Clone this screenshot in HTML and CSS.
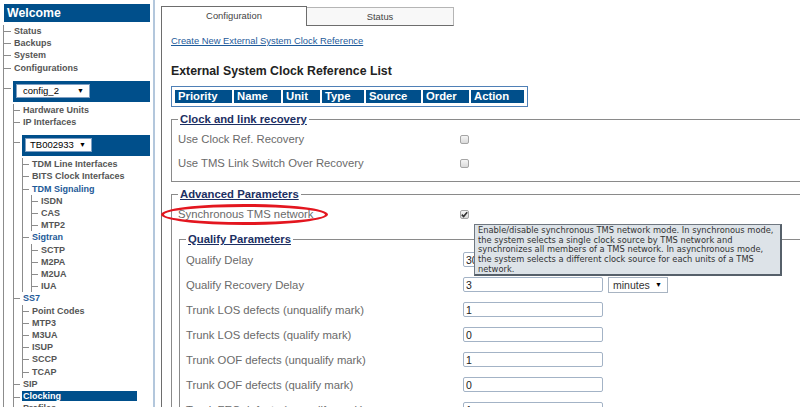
FILE: index.html
```html
<!DOCTYPE html>
<html>
<head>
	<meta charset="utf-8">
	<title>Clocking</title>
	<link rel="stylesheet" href="styles.css">
</head>
<body>
<div class="page">
	<div class="sidebar">
		<div class="welcome">Welcome</div>
		<ul class="tree">
			<li>Status</li>
			<li>Backups</li>
			<li>System</li>
			<li>Configurations</li>
			<li class="boxed">
				<div class="selbox"><span class="sel sel-config">config_2<i>&#9660;</i></span></div>
				<ul>
					<li>Hardware Units</li>
					<li>IP Interfaces</li>
					<li class="boxed">
						<div class="selbox"><span class="sel sel-unit">TB002933<i>&#9660;</i></span></div>
						<ul>
							<li>TDM Line Interfaces</li>
							<li>BITS Clock Interfaces</li>
							<li><span class="cat">TDM Signaling</span>
								<ul>
									<li>ISDN</li>
									<li>CAS</li>
									<li>MTP2</li>
								</ul>
							</li>
							<li><span class="cat">Sigtran</span>
								<ul>
									<li>SCTP</li>
									<li>M2PA</li>
									<li>M2UA</li>
									<li>IUA</li>
								</ul>
							</li>
						</ul>
					</li>
					<li><span class="cat">SS7</span>
						<ul>
							<li>Point Codes</li>
							<li>MTP3</li>
							<li>M3UA</li>
							<li>ISUP</li>
							<li>SCCP</li>
							<li>TCAP</li>
						</ul>
					</li>
					<li>SIP</li>
					<li class="current"><span>Clocking</span></li>
					<li>Profiles</li>
				</ul>
			</li>
		</ul>
	</div>

	<div class="main">
		<div class="tabs">
			<div class="tab active">Configuration</div>
			<div class="tab">Status</div>
		</div>
		<div class="content">
			<a class="create" href="#">Create New External System Clock Reference</a>
			<h2>External System Clock Reference List</h2>
			<table class="list">
				<tr>
					<th class="c1">Priority</th>
					<th class="c2">Name</th>
					<th class="c3">Unit</th>
					<th class="c4">Type</th>
					<th class="c5">Source</th>
					<th class="c6">Order</th>
					<th class="c7">Action</th>
				</tr>
			</table>

			<fieldset class="group">
				<legend>Clock and link recovery</legend>
				<div class="row"><label>Use Clock Ref. Recovery</label><span class="check"></span></div>
				<div class="row"><label>Use TMS Link Switch Over Recovery</label><span class="check"></span></div>
			</fieldset>

			<fieldset class="group advanced">
				<legend>Advanced Parameters</legend>
				<div class="row"><label>Synchronous TMS network</label><span class="check"><svg width="7" height="7" viewBox="0 0 7 7"><polyline points="0.8,3.6 2.6,5.5 6.2,1.2" fill="none" stroke="#333" stroke-width="1.6"/></svg></span></div>

				<fieldset class="group qualify">
					<legend>Qualify Parameters</legend>
					<div class="row"><label>Qualify Delay</label><input class="field" type="text" value="30"></div>
					<div class="row"><label>Qualify Recovery Delay</label><input class="field" type="text" value="3"><span class="unit">minutes<i>&#9660;</i></span></div>
					<div class="row"><label>Trunk LOS defects (unqualify mark)</label><input class="field" type="text" value="1"></div>
					<div class="row"><label>Trunk LOS defects (qualify mark)</label><input class="field" type="text" value="0"></div>
					<div class="row"><label>Trunk OOF defects (unqualify mark)</label><input class="field" type="text" value="1"></div>
					<div class="row"><label>Trunk OOF defects (qualify mark)</label><input class="field" type="text" value="0"></div>
					<div class="row"><label>Trunk FEC defects (unqualify mark)</label><input class="field" type="text" value="1"></div>
				</fieldset>
			</fieldset>
		</div>
	</div>

	<div class="mark"></div>
	<div class="tip">Enable/disable synchronous TMS network mode. In synchronous mode,<br>the system selects a single clock source by TMS network and<br>synchronizes all members of a TMS network. In asynchronous mode,<br>the system selects a different clock source for each units of a TMS<br>network.</div>
</div>
</body>
</html>
```

FILE: styles.css
```css
*{margin:0; padding:0; box-sizing:border-box;}
body{
	font-family:"Liberation Sans", Arial, sans-serif;
	color:#333;
	background:#fff;
	width:800px;
	height:407px;
	overflow:hidden;
}
.page{
	position:relative;
	display:flex;
	height:407px;
	overflow:hidden;
}

/* sidebar */
.sidebar{
	width:155px;
	flex:none;
	padding-top:4px;
	border-right:2px solid #b3c7dc;
	overflow:hidden;
}
.welcome{
	margin-left:4px;
	width:146px;
	height:18px;
	padding-left:3px;
	background:#004f8b;
	color:#fff;
	font-size:12.3px;
	font-weight:bold;
	line-height:18px;
}
.tree, .tree ul{list-style:none;}
.tree{
	margin:3px 0 0 3px;
	border-left:1px solid #8c8c8c;
}
.tree ul{
	margin-left:-1px;
	border-left:1px solid #8c8c8c;
}
.tree li{
	padding-left:10px;
	font-size:9px;
	font-weight:bold;
	line-height:12.2px;
	color:#555;
	white-space:nowrap;
	background:linear-gradient(#8c8c8c,#8c8c8c) no-repeat 0 6px / 7px 1px;
}
.tree ul li{
	padding-left:9px;
	background-size:6px 1px;
}
.tree .cat{color:#1d5a98;}
.tree li.boxed{
	padding-top:7px;
	background-position:0 14px;
}
.selbox{
	height:21px;
	margin:0 3px 2px -1px;
	padding:3px 0 0 3px;
	background:#004f8b;
}
.sel{
	display:flex;
	justify-content:space-between;
	align-items:center;
	height:14px;
	padding:0 5px 0 6px;
	background:#fff;
	border:1px solid #7f9fc2;
	font-size:9.5px;
	font-weight:normal;
	color:#000;
}
.sel i{font-style:normal; font-size:7px;}
.sel-config{width:74px;}
.sel-unit{width:67px; padding-left:4px;}
.tree li.current span{
	display:block;
	width:115px;
	height:10px;
	margin:1px 0 1.2px -1px;
	padding-left:1px;
	line-height:10px;
	background:#004f8b;
	color:#fff;
}

/* main */
.main{
	flex:1;
	margin:6px 0 0 6px;
	border-left:1px solid #6d6d6d;
	overflow:hidden;
}
.tabs{
	display:flex;
	height:20px;
}
.tab{
	font-size:9.4px;
	color:#444;
	text-align:center;
}
.tab.active{
	width:145px;
	height:20px;
	border-top:1px solid #6d6d6d;
	border-right:1px solid #6d6d6d;
	line-height:17px;
}
.tab:not(.active){
	width:147px;
	height:19px;
	margin-top:1px;
	border-top:1px solid #b5b5b5;
	border-right:1px solid #b5b5b5;
	border-bottom:1px solid #6d6d6d;
	background:#f8f8f8;
	line-height:17px;
}
.content{padding-left:9px;}
.create{
	display:inline-block;
	margin-top:9px;
	font-size:9.4px;
	line-height:11px;
	color:#1d5a9a;
}
h2{
	margin-top:16px;
	font-size:12.3px;
	line-height:15px;
	color:#222;
}
.list{
	margin-top:7px;
	border:1px solid #4f80b6;
	border-spacing:2px;
	padding:1px;
}
.list th{
	height:13px;
	padding:0 0 0 3px;
	background:#004f8b;
	color:#fff;
	font-size:11.3px;
	line-height:13px;
	text-align:left;
}
.list .c1{width:57px;}
.list .c2{width:47px;}
.list .c3{width:37px;}
.list .c4{width:42px;}
.list .c5{width:55px;}
.list .c6{width:46px;}
.list .c7{width:53px;}

/* parameter groups */
.group{
	width:660px;
	margin-top:6px;
	padding:1px 0 6px 6px;
	border:1px solid #8a8a8a;
}
.group legend{
	padding:0 2px;
	font-size:11.3px;
	font-weight:bold;
	line-height:13px;
	color:#1c2f63;
	text-decoration:underline;
}
.row{
	display:flex;
	align-items:center;
	height:24px;
}
.row label{
	width:282px;
	flex:none;
	font-size:11.3px;
	color:#6a6a6a;
}
.qualify{
	width:640px;
	margin:7px 0 0 1px;
	padding-bottom:0;
}
.qualify .row{height:25px;}
.qualify .row label{width:277px;}
.check{
	display:flex;
	align-items:center;
	justify-content:center;
	width:9px;
	height:9px;
	border:1px solid #a5a5a5;
	border-radius:2px;
	background:linear-gradient(#f5f5f5,#dadada);
}
.field{
	width:140px;
	height:15px;
	padding:0 2px;
	border:1px solid #a3b3c6;
	border-radius:2px;
	font:10.5px "Liberation Sans", Arial, sans-serif;
	color:#222;
	outline:none;
}
.unit{
	display:flex;
	justify-content:space-between;
	align-items:center;
	width:60px;
	height:16px;
	margin-left:5px;
	padding:0 5px 0 4px;
	border:1px solid #a8b4c2;
	font-size:10.5px;
	color:#333;
}
.unit i{font-style:normal; font-size:7px; color:#000;}

/* overlays */
.mark{
	position:absolute;
	left:161px;
	top:204px;
	width:167px;
	height:21px;
	border:3px solid #e3161f;
	border-radius:50%;
}
.tip{
	position:absolute;
	left:474px;
	top:224px;
	width:308px;
	height:52px;
	padding:1px 3px;
	border:1px solid #6f7780;
	border-right:2px solid #56606a;
	border-bottom:2px solid #56606a;
	background:#dde3e8;
	font-family:"DejaVu Sans", Verdana, sans-serif;
	font-size:8.3px;
	line-height:9.7px;
	color:#333;
	white-space:nowrap;
}
```
